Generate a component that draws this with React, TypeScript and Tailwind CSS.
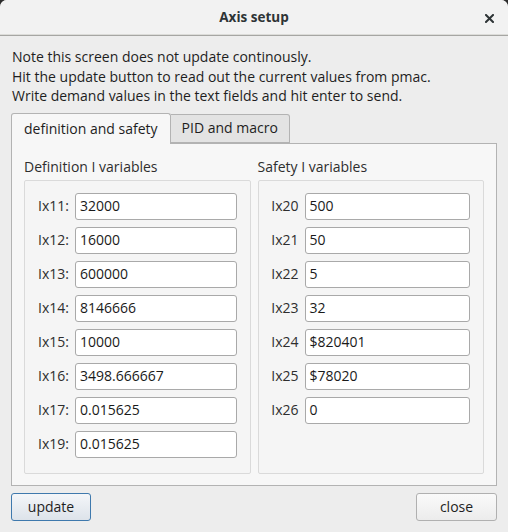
import React from "react";

const leftRows: [string, string][] = [
  ["Ix11:", "32000"],
  ["Ix12:", "16000"],
  ["Ix13:", "600000"],
  ["Ix14:", "8146666"],
  ["Ix15:", "10000"],
  ["Ix16:", "3498.666667"],
  ["Ix17:", "0.015625"],
  ["Ix19:", "0.015625"],
];

const rightRows: [string, string][] = [
  ["Ix20", "500"],
  ["Ix21", "50"],
  ["Ix22", "5"],
  ["Ix23", "32"],
  ["Ix24", "$820401"],
  ["Ix25", "$78020"],
  ["Ix26", "0"],
];

function Field({ value }: { value: string }) {
  return (
    <div className="h-[27px] flex items-center bg-white border border-[#a9a9a9] rounded-[3px] pl-[4px] text-[#1a1a1a]">
      {value}
    </div>
  );
}

function Group({ rows, labelWidth }: { rows: [string, string][]; labelWidth: string }) {
  return (
    <div className="flex-1 border border-[#dadada] rounded-[2px] bg-[#f5f5f5] pl-[12px] pr-[13px] pt-[12px] pb-[15px] flex flex-col gap-[7px]">
      {rows.map(([l, v]) => (
        <div key={l} className="flex items-center gap-[6px]">
          <div className={`${labelWidth} text-right text-[#2e2e2e]`}>{l}</div>
          <div className="flex-1">
            <Field value={v} />
          </div>
        </div>
      ))}
    </div>
  );
}

export default function App() {
  return (
    <div
      className="w-[508px] h-[532px] bg-[#2d2d2d] text-[14px] leading-[19.5px]"
      style={{ fontFamily: '"Open Sans", "Noto Sans", sans-serif' }}
    >
      <div className="w-full h-full bg-[#ededed] rounded-t-[7px] overflow-hidden flex flex-col">
        <div className="h-[36px] shrink-0 bg-[#f2f2f2] border-b border-[#a6a6a3] shadow-[inset_0_-1px_0_#dcdcd9] flex items-center justify-center relative">
          <span className="font-bold text-[#2e3436] text-[13.5px]">Axis setup</span>
          <svg className="absolute right-[14px] top-[14px]" width="9" height="9" viewBox="0 0 9 9">
            <path d="M1 1 L8 8 M8 1 L1 8" stroke="#2e3436" strokeWidth="2" strokeLinecap="square" />
          </svg>
        </div>
        <div className="px-[12px] pt-[11px] text-[#1e1e1e]">
          <div>Note this screen does not update continously.</div>
          <div>Hit the update button to read out the current values from pmac.</div>
          <div>Write demand values in the text fields and hit enter to send.</div>
        </div>
        <div className="px-[11px] pt-[7px]">
          <div className="flex items-end h-[30px] relative z-10">
            <div className="h-[31px] mb-[-1px] bg-[#f7f7f7] border border-[#b3b3b3] border-b-0 rounded-t-[3px] px-[12px] flex items-center text-[#1e1e1e]">
              definition and safety
            </div>
            <div className="h-[29px] bg-[#e3e3e3] border border-[#b3b3b3] border-l-0 rounded-tr-[3px] px-[11px] flex items-center text-[#1e1e1e]">
              PID and macro
            </div>
          </div>
          <div className="h-[343px] bg-[#f7f7f7] border border-[#b3b3b3] px-[12px] pb-[11px] flex gap-[7px]">
            <div className="flex-1 flex flex-col">
              <div className="h-[36px] flex items-end pb-[3px] text-[#2e2e2e]">Definition I variables</div>
              <Group rows={leftRows} labelWidth="w-[32px]" />
            </div>
            <div className="flex-1 flex flex-col">
              <div className="h-[36px] flex items-end pb-[3px] text-[#2e2e2e]">Safety I variables</div>
              <Group rows={rightRows} labelWidth="w-[28px]" />
            </div>
          </div>
        </div>
        <div className="px-[11px] pt-[7px] flex justify-between">
          <button className="w-[80px] h-[28px] rounded-[3px] border border-[#3f79ad] bg-gradient-to-b from-[#f4f6f9] to-[#dde3ea] text-[#1e1e1e]">
            update
          </button>
          <button className="w-[81px] h-[28px] rounded-[3px] border border-[#b0b0b0] bg-gradient-to-b from-[#fafafa] to-[#ececec] text-[#1e1e1e]">
            close
          </button>
        </div>
      </div>
    </div>
  );
}
